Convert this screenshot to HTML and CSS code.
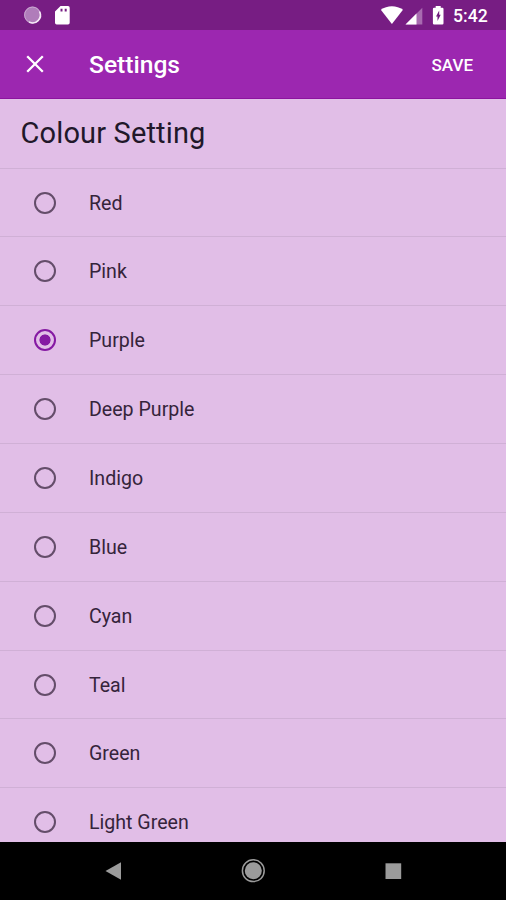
FILE: index.html
```html
<!DOCTYPE html>
<html lang="en">
<head>
<meta charset="utf-8">
<title>Settings</title>
<link rel="stylesheet" href="styles.css">
</head>
<body>
<div class="screen">
  <div class="status">
    <svg class="status-left" width="80" height="30" viewBox="0 0 80 30">
      <circle cx="32.500" cy="15" r="8.400" fill="#b07dba"/>
      <circle cx="32.500" cy="15" r="7.900" fill="none" stroke="#c9a4d0"/>
      <path d="M39.500 11.500A7.800 7.800 0 0 1 29 22" fill="none" stroke="#f4e8f6" stroke-width="1.600"/>
      <path fill="#fff" fill-rule="evenodd" d="M60.500 6H68a1.700 1.700 0 0 1 1.700 1.700v15.100a1.700 1.700 0 0 1-1.700 1.700H56.700a1.700 1.700 0 0 1-1.700-1.700V11.600zM60.500 8.700v2.800h2v-2.800zM64.700 8.700v2.800h2v-2.800z"/>
    </svg>
    <svg class="status-icons" width="66" height="30" viewBox="380 0 66 30">
      <path fill="#fff" d="M380.800 9.800C387 5 396.800 5 403 9.800L391.900 24z"/>
      <path fill="#a86bb0" d="M422.300 7.700v16.800h-16.800z"/>
      <path fill="#fff" d="M416.500 13.500v11h-11z"/>
      <path fill="#fff" d="M435.700 5.900h5v1.800h1.600a1.200 1.200 0 0 1 1.200 1.200v14.400a1.200 1.200 0 0 1-1.200 1.200h-8.200a1.200 1.200 0 0 1-1.200-1.200V8.900a1.200 1.200 0 0 1 1.200-1.200h1.600z"/>
      <path fill="#6f1a7d" d="M439.200 10.500v4.300h1.500l-3.200 6.200v-4.500h-1.500z"/>
    </svg>
    <span class="time">5:42</span>
  </div>
  <header class="appbar">
    <svg class="close" width="18" height="18" viewBox="0 0 18 18"><path d="M1.200 1.200L16.800 16.800M16.800 1.200L1.200 16.800" stroke="#fff" stroke-width="2.300"/></svg>
    <h1>Settings</h1>
    <button class="save">SAVE</button>
  </header>
  <main>
    <h2>Colour Setting</h2>
    <label class="row"><span class="radio"></span>Red</label>
    <label class="row"><span class="radio"></span>Pink</label>
    <label class="row"><span class="radio selected"></span>Purple</label>
    <label class="row"><span class="radio"></span>Deep Purple</label>
    <label class="row"><span class="radio"></span>Indigo</label>
    <label class="row"><span class="radio"></span>Blue</label>
    <label class="row"><span class="radio"></span>Cyan</label>
    <label class="row"><span class="radio"></span>Teal</label>
    <label class="row"><span class="radio"></span>Green</label>
    <label class="row"><span class="radio"></span>Light Green</label>
  </main>
  <nav>
    <svg width="506" height="58" viewBox="0 842 506 58">
      <path fill="#9b9b9b" d="M105.500 871L121 862.200v17.600z"/>
      <circle cx="253.300" cy="870.700" r="10.900" fill="none" stroke="#9b9b9b" stroke-width="1.500"/>
      <circle cx="253.300" cy="870.700" r="8.500" fill="#9b9b9b"/>
      <path fill="#9b9b9b" d="M385.500 863.300h15.700v15.700h-15.700z"/>
    </svg>
  </nav>
</div>
</body>
</html>
```

FILE: styles.css
```css
* { box-sizing: border-box; }
body { margin: 0; font-family: Roboto, sans-serif; }
.screen {
  width: 506px;
  height: 900px;
  display: flex;
  flex-direction: column;
  overflow: hidden;
  background: #e1bee7;
}
.status {
  flex: none;
  height: 30px;
  display: flex;
  align-items: center;
  background: #771d83;
  color: #fff;
}
.status-icons { margin-left: auto; }
.time {
  width: 60px;
  padding: 2px 0 0 7px;
  font-size: 17.6px;
  line-height: 28px;
  font-weight: 500;
}
.appbar {
  flex: none;
  height: 69px;
  display: flex;
  align-items: center;
  padding: 0 33px 0 26px;
  background: #9c27b0;
  border-bottom: 1px solid #8c149f;
  color: #fff;
}
h1 {
  margin: 1px 0 0 45px;
  font-size: 24.6px;
  line-height: 30px;
  font-weight: 500;
}
.save {
  margin: 2px 0 0 auto;
  padding: 0;
  border: 0;
  background: none;
  color: #fff;
  font: 500 17px/20px Roboto, sans-serif;
}
main { flex: 1; min-height: 0; overflow: hidden; }
h2 {
  height: 68.6px;
  margin: 0;
  padding: 0 20.5px;
  color: #21182a;
  font-size: 29px;
  line-height: 69px;
  font-weight: 400;
  letter-spacing: 0.15px;
}
.row {
  height: 68.86px;
  display: flex;
  align-items: center;
  gap: 33.4px;
  padding: 2px 0 0 33.6px;
  border-top: 1px solid #d0b0d6;
  color: #35243b;
  font-size: 19.6px;
  line-height: 24px;
}
.radio {
  flex: none;
  width: 22px;
  height: 22px;
  margin-bottom: 2px;
  border: 2px solid #644d6a;
  border-radius: 50%;
}
.selected {
  border-color: #8519a3;
  background: radial-gradient(circle, #8519a3 5.2px, transparent 5.9px);
}
nav { flex: none; height: 58px; background: #000; }
nav svg { display: block; }
```
